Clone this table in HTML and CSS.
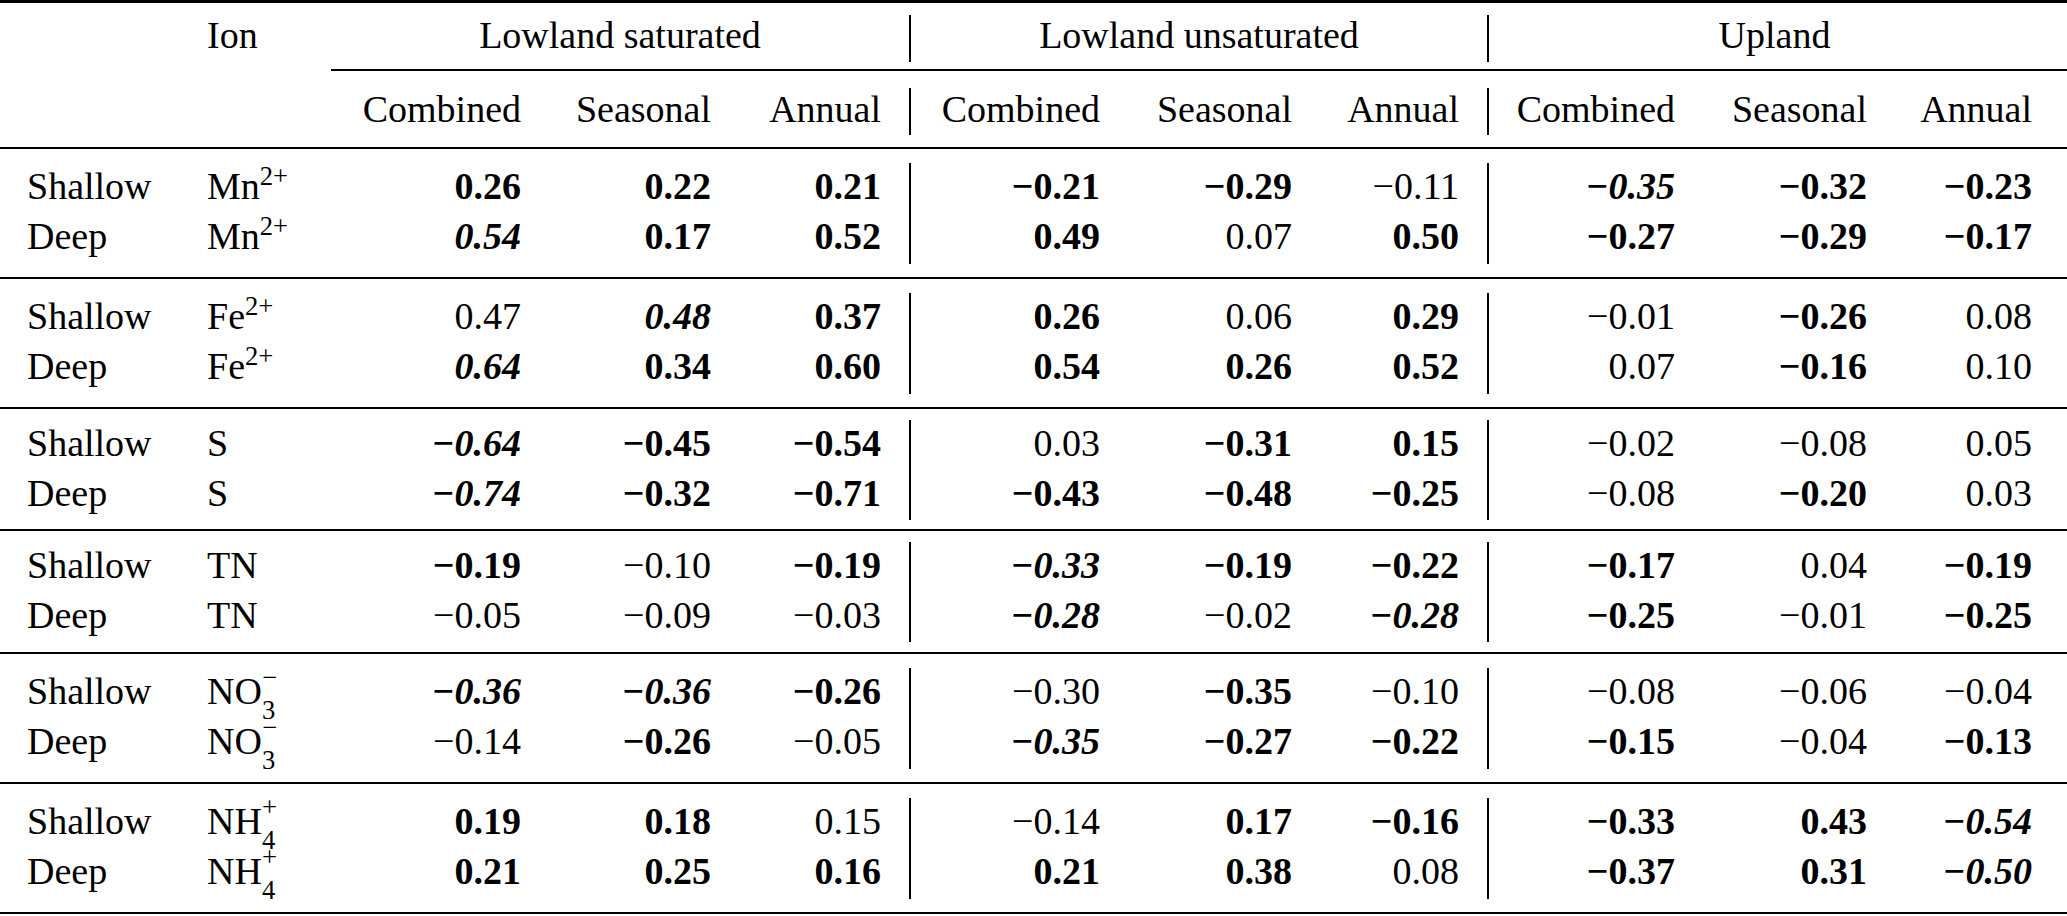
FILE: index.html
```html
<!DOCTYPE html>
<html lang="en">
<head>
<meta charset="utf-8">
<title>Correlation table</title>
<link rel="stylesheet" href="styles.css">
</head>
<body>
<div class="tbl">
  <div class="grid head">
    <div class="cell"></div>
    <div class="cell lab h1">Ion</div>
    <div class="cell gh">Lowland saturated</div>
    <div class="hv"><div class="vl"></div></div>
    <div class="cell gh">Lowland unsaturated</div>
    <div class="hv"><div class="vl"></div></div>
    <div class="cell gh last">Upland</div>

    <div class="cell"></div>
    <div class="cell"></div>
    <div class="cell ch">Combined</div>
    <div class="cell ch">Seasonal</div>
    <div class="cell ch">Annual</div>
    <div class="hv2"><div class="vl"></div></div>
    <div class="cell ch">Combined</div>
    <div class="cell ch">Seasonal</div>
    <div class="cell ch">Annual</div>
    <div class="hv2"><div class="vl"></div></div>
    <div class="cell ch">Combined</div>
    <div class="cell ch">Seasonal</div>
    <div class="cell ch">Annual</div>
  </div>

  <div class="grid grp hi">
    <div class="cell lab">Shallow</div>
    <div class="cell lab">Mn<span class="sup">2+</span></div>
    <div class="cell v b">0.26</div>
    <div class="cell v b">0.22</div>
    <div class="cell v b">0.21</div>
    <div class="vs"></div>
    <div class="cell v b">−0.21</div>
    <div class="cell v b">−0.29</div>
    <div class="cell v">−0.11</div>
    <div class="vs"></div>
    <div class="cell v bi">−0.35</div>
    <div class="cell v b">−0.32</div>
    <div class="cell v b">−0.23</div>

    <div class="cell lab">Deep</div>
    <div class="cell lab">Mn<span class="sup">2+</span></div>
    <div class="cell v bi">0.54</div>
    <div class="cell v b">0.17</div>
    <div class="cell v b">0.52</div>
    <div class="cell v b">0.49</div>
    <div class="cell v">0.07</div>
    <div class="cell v b">0.50</div>
    <div class="cell v b">−0.27</div>
    <div class="cell v b">−0.29</div>
    <div class="cell v b">−0.17</div>
  </div>

  <div class="grid grp hi">
    <div class="cell lab">Shallow</div>
    <div class="cell lab">Fe<span class="sup">2+</span></div>
    <div class="cell v">0.47</div>
    <div class="cell v bi">0.48</div>
    <div class="cell v b">0.37</div>
    <div class="vs"></div>
    <div class="cell v b">0.26</div>
    <div class="cell v">0.06</div>
    <div class="cell v b">0.29</div>
    <div class="vs"></div>
    <div class="cell v">−0.01</div>
    <div class="cell v b">−0.26</div>
    <div class="cell v">0.08</div>

    <div class="cell lab">Deep</div>
    <div class="cell lab">Fe<span class="sup">2+</span></div>
    <div class="cell v bi">0.64</div>
    <div class="cell v b">0.34</div>
    <div class="cell v b">0.60</div>
    <div class="cell v b">0.54</div>
    <div class="cell v b">0.26</div>
    <div class="cell v b">0.52</div>
    <div class="cell v">0.07</div>
    <div class="cell v b">−0.16</div>
    <div class="cell v">0.10</div>
  </div>

  <div class="grid grp lo">
    <div class="cell lab">Shallow</div>
    <div class="cell lab">S</div>
    <div class="cell v bi">−0.64</div>
    <div class="cell v b">−0.45</div>
    <div class="cell v b">−0.54</div>
    <div class="vs"></div>
    <div class="cell v">0.03</div>
    <div class="cell v b">−0.31</div>
    <div class="cell v b">0.15</div>
    <div class="vs"></div>
    <div class="cell v">−0.02</div>
    <div class="cell v">−0.08</div>
    <div class="cell v">0.05</div>

    <div class="cell lab">Deep</div>
    <div class="cell lab">S</div>
    <div class="cell v bi">−0.74</div>
    <div class="cell v b">−0.32</div>
    <div class="cell v b">−0.71</div>
    <div class="cell v b">−0.43</div>
    <div class="cell v b">−0.48</div>
    <div class="cell v b">−0.25</div>
    <div class="cell v">−0.08</div>
    <div class="cell v b">−0.20</div>
    <div class="cell v">0.03</div>
  </div>

  <div class="grid grp lo lo2">
    <div class="cell lab">Shallow</div>
    <div class="cell lab">TN</div>
    <div class="cell v b">−0.19</div>
    <div class="cell v">−0.10</div>
    <div class="cell v b">−0.19</div>
    <div class="vs"></div>
    <div class="cell v bi">−0.33</div>
    <div class="cell v b">−0.19</div>
    <div class="cell v b">−0.22</div>
    <div class="vs"></div>
    <div class="cell v b">−0.17</div>
    <div class="cell v">0.04</div>
    <div class="cell v b">−0.19</div>

    <div class="cell lab">Deep</div>
    <div class="cell lab">TN</div>
    <div class="cell v">−0.05</div>
    <div class="cell v">−0.09</div>
    <div class="cell v">−0.03</div>
    <div class="cell v bi">−0.28</div>
    <div class="cell v">−0.02</div>
    <div class="cell v bi">−0.28</div>
    <div class="cell v b">−0.25</div>
    <div class="cell v">−0.01</div>
    <div class="cell v b">−0.25</div>
  </div>

  <div class="grid grp hi">
    <div class="cell lab">Shallow</div>
    <div class="cell lab">NO<span class="st"><span class="up">−</span><span class="dn">3</span></span></div>
    <div class="cell v bi">−0.36</div>
    <div class="cell v bi">−0.36</div>
    <div class="cell v b">−0.26</div>
    <div class="vs"></div>
    <div class="cell v">−0.30</div>
    <div class="cell v b">−0.35</div>
    <div class="cell v">−0.10</div>
    <div class="vs"></div>
    <div class="cell v">−0.08</div>
    <div class="cell v">−0.06</div>
    <div class="cell v">−0.04</div>

    <div class="cell lab">Deep</div>
    <div class="cell lab">NO<span class="st"><span class="up">−</span><span class="dn">3</span></span></div>
    <div class="cell v">−0.14</div>
    <div class="cell v b">−0.26</div>
    <div class="cell v">−0.05</div>
    <div class="cell v bi">−0.35</div>
    <div class="cell v b">−0.27</div>
    <div class="cell v b">−0.22</div>
    <div class="cell v b">−0.15</div>
    <div class="cell v">−0.04</div>
    <div class="cell v b">−0.13</div>
  </div>

  <div class="grid grp hi">
    <div class="cell lab">Shallow</div>
    <div class="cell lab">NH<span class="st"><span class="up">+</span><span class="dn">4</span></span></div>
    <div class="cell v b">0.19</div>
    <div class="cell v b">0.18</div>
    <div class="cell v">0.15</div>
    <div class="vs"></div>
    <div class="cell v">−0.14</div>
    <div class="cell v b">0.17</div>
    <div class="cell v b">−0.16</div>
    <div class="vs"></div>
    <div class="cell v b">−0.33</div>
    <div class="cell v b">0.43</div>
    <div class="cell v bi">−0.54</div>

    <div class="cell lab">Deep</div>
    <div class="cell lab">NH<span class="st"><span class="up">+</span><span class="dn">4</span></span></div>
    <div class="cell v b">0.21</div>
    <div class="cell v b">0.25</div>
    <div class="cell v b">0.16</div>
    <div class="cell v b">0.21</div>
    <div class="cell v b">0.38</div>
    <div class="cell v">0.08</div>
    <div class="cell v b">−0.37</div>
    <div class="cell v b">0.31</div>
    <div class="cell v bi">−0.50</div>
  </div>
</div>
</body>
</html>
```

FILE: styles.css
```css
* {
  box-sizing: border-box;
}

html, body {
  margin: 0;
  padding: 0;
  background: #ffffff;
}

body {
  color: #000000;
  font-family: "Liberation Serif", "Times New Roman", serif;
  font-size: 38px;
}

.tbl {
  width: 2067px;
  border-top: 3px solid #000000;
}

.grid {
  display: grid;
  grid-template-columns: 180px 151px 218px 190px 170px 2px 217px 192px 167px 2px 214px 192px 165px;
  padding-right: 7px;
}

.cell {
  line-height: 50px;
  white-space: nowrap;
}

.lab {
  padding-left: 27px;
}

/* header */
.head {
  grid-template-rows: 68px 76px;
  border-bottom: 2px solid #000000;
}

.h1 {
  padding-top: 7px;
}

.gh {
  grid-column: span 3;
  text-align: center;
  padding-top: 7px;
  border-bottom: 2px solid #000000;
}

.gh.last {
  margin-right: -7px;
  padding-right: 7px;
}

.hv {
  display: flex;
  flex-direction: column;
  border-bottom: 2px solid #000000;
}

.hv .vl {
  flex: 1;
  background: #000000;
  margin: 12px 0 7px;
}

.hv2 {
  display: flex;
  flex-direction: column;
}

.hv2 .vl {
  flex: 1;
  background: #000000;
  margin: 17px 0 12px;
}

.ch {
  text-align: right;
  padding-right: 28px;
  padding-top: 13px;
}

/* data groups */
.grp {
  grid-template-rows: 50px 50px;
  border-bottom: 2px solid #000000;
}

.grp.hi {
  padding-top: 12px;
  padding-bottom: 16px;
}

.grp.lo {
  padding-top: 9px;
  padding-bottom: 11px;
}

.grp.lo2 {
  padding-bottom: 12px;
}

.vs {
  grid-row: span 2;
  background: #000000;
}

.grp.hi .vs {
  margin: 2px 0 -3px;
}

.grp.lo .vs {
  margin: 2px 0 -2px;
}

.v {
  text-align: right;
  padding-right: 28px;
}

.b {
  font-weight: bold;
}

.bi {
  font-weight: bold;
  font-style: italic;
}

/* chemical scripts */
.sup {
  font-size: 0.7em;
  line-height: 1;
  position: relative;
  top: -0.52em;
}

.st {
  display: inline-grid;
  font-size: 0.7em;
  line-height: 1;
  vertical-align: baseline;
}

.st > span {
  grid-area: 1 / 1;
  position: relative;
}

.st .up {
  top: -0.66em;
}

.st .dn {
  top: 0.56em;
}
```
